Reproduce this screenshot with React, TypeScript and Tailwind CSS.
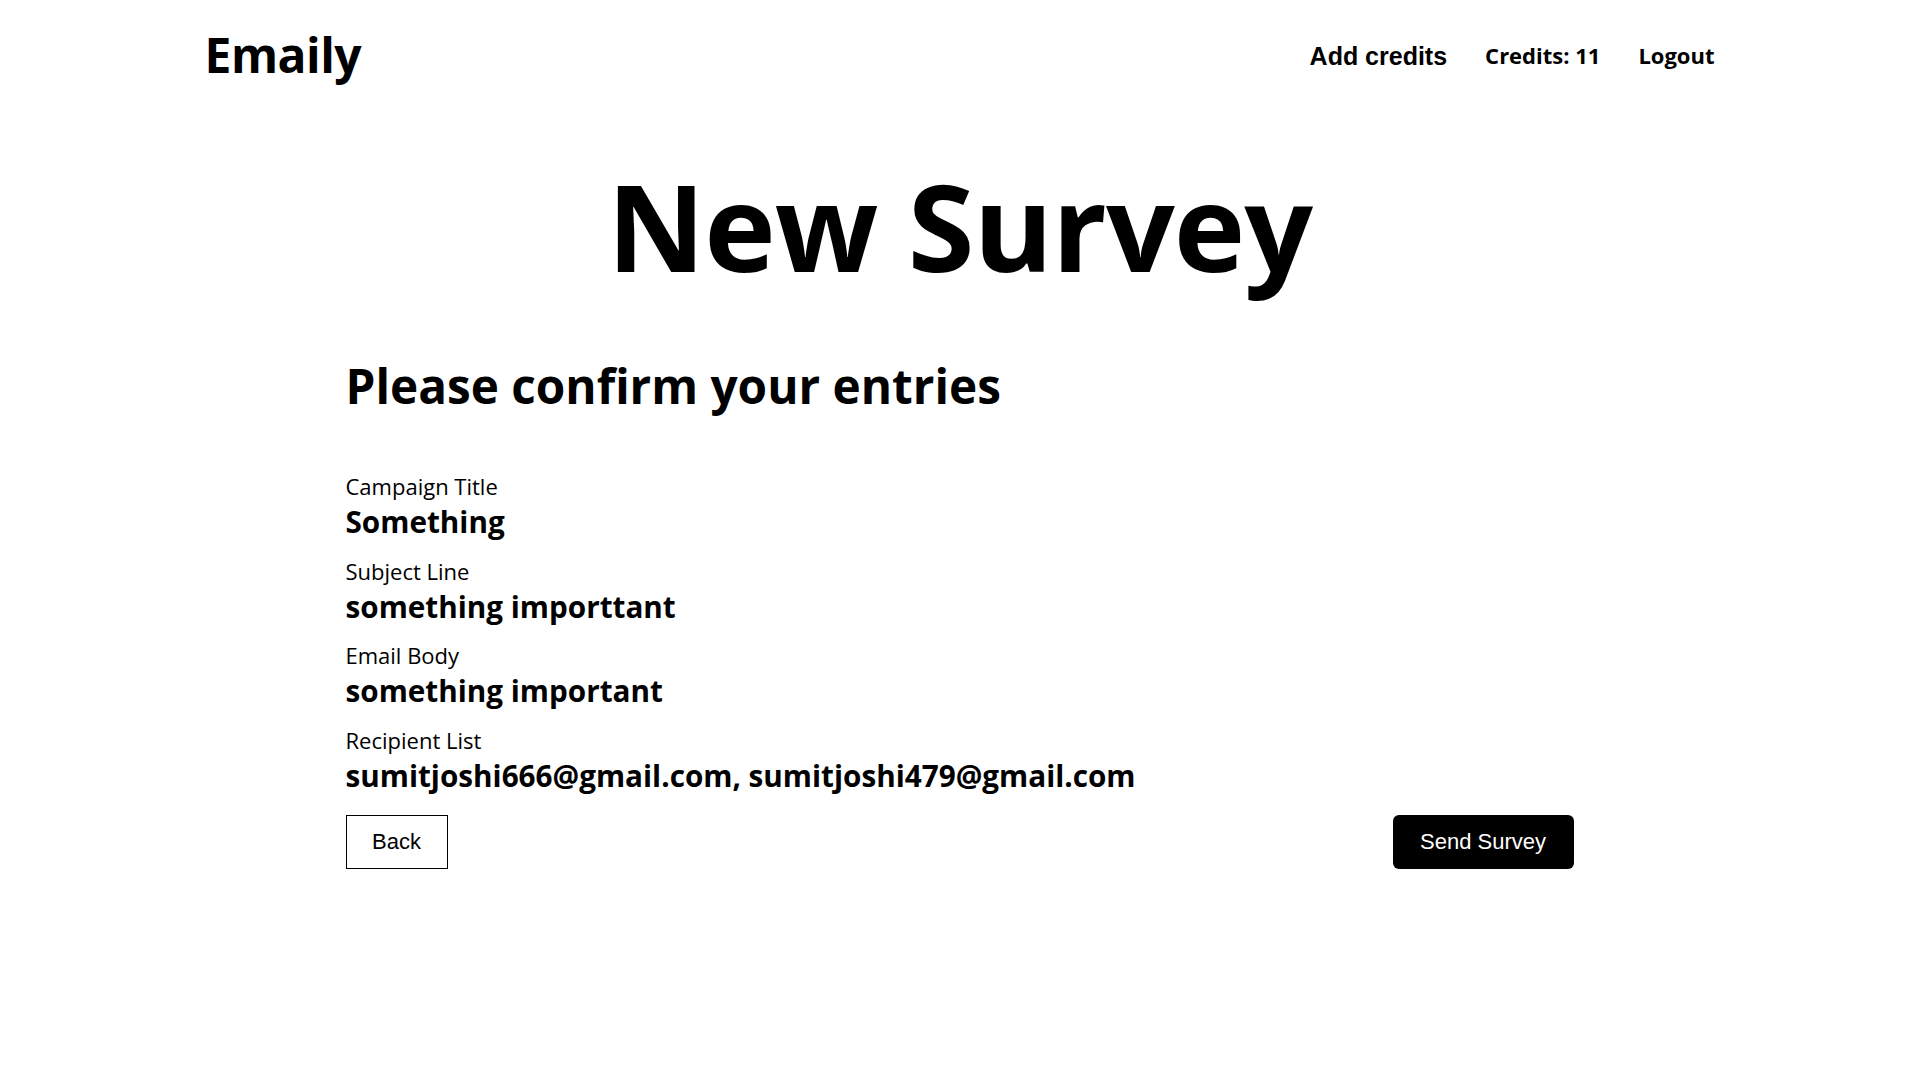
import React from "react";

function Field({ label, value }: { label: string; value: string }) {
  return (
    <div className="flex flex-col">
      <div className="text-[22px] leading-[30px] font-normal text-black">{label}</div>
      <div className="text-[29.7px] leading-[41px] font-bold text-black">{value}</div>
    </div>
  );
}

export default function App() {
  return (
    <div className="min-h-screen bg-white text-black font-['Open_Sans',sans-serif]">
      <header className="mx-auto flex h-[110px] w-[1510px] items-center justify-between">
        <a className="text-[48px] font-bold leading-none tracking-[-0.5px]">Emaily</a>
        <ul className="mt-[1px] flex items-center gap-[38px]">
          <li className="mt-[2px] font-['Liberation_Sans',Arial,sans-serif] text-[25px] font-bold">Add credits</li>
          <li className="text-[22px] font-bold">Credits: 11</li>
          <li className="text-[22px] font-bold">Logout</li>
        </ul>
      </header>
      <h1 className="mt-[40px] text-center text-[121px] font-bold leading-[150px] tracking-[-1px]">New Survey</h1>
      <main className="mx-auto mt-[51px] w-[1228px]">
        <h2 className="text-[47.7px] font-bold leading-[70px]">Please confirm your entries</h2>
        <div className="mt-[50px] flex flex-col gap-[13.5px]">
          <Field label="Campaign Title" value="Something" />
          <Field label="Subject Line" value="something importtant" />
          <Field label="Email Body" value="something important" />
          <Field label="Recipient List" value="sumitjoshi666@gmail.com, sumitjoshi479@gmail.com" />
        </div>
        <div className="mt-[19px] flex items-center justify-between font-['Liberation_Sans',Arial,sans-serif]">
          <button className="h-[54px] w-[102px] border border-black bg-white text-[22px] text-black">Back</button>
          <button className="h-[54px] w-[181px] rounded-[6px] bg-black text-[22px] text-white">Send Survey</button>
        </div>
      </main>
    </div>
  );
}
